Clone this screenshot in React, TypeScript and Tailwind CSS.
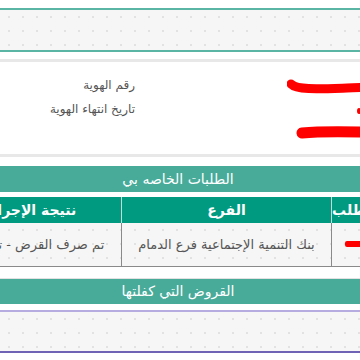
const dots =
  "bg-[#f6f6f6] bg-[radial-gradient(#e2e2e2_1px,transparent_1px)] bg-[size:14px_14px]";

function Scribbles() {
  return (
    <svg className="absolute inset-0 w-[123px] h-[92px]" viewBox="0 0 123 92" fill="none">
      <path
        d="M4 22 C 10 28, 30 27, 60 26 S 100 24, 130 25"
        stroke="#ff0000"
        strokeWidth="9"
        strokeLinecap="round"
      />
      <ellipse cx="72" cy="49" rx="2" ry="3" fill="#ff0000" />
      <path d="M15 71 Q 45 68 130 72" stroke="#ff0000" strokeWidth="11" strokeLinecap="round" />
    </svg>
  );
}

export default function App() {
  return (
    <div className="w-[360px] h-[360px] overflow-hidden bg-white font-['DejaVu_Sans',sans-serif]">
      <div dir="rtl" className="w-[464px] ml-[-54px] pt-[8px]">
        {/* search strip */}
        <div className={`h-[44px] border-y-2 border-[#5bb5a4] ${dots}`} />

        {/* identity info */}
        <div className="mt-[7px] h-[98px] border-y-[3px] border-[#e8e8e8] bg-white flex flex-row">
          <div className="relative w-[123px] h-full">
            <Scribbles />
          </div>
          <div className="flex-1" />
          <div className="w-[189px] pt-[11px] text-[12px] text-[#555]">
            <div className="h-[24px] leading-[24px]">رقم الهوية</div>
            <div className="h-[24px] leading-[24px]">تاريخ انتهاء الهوية</div>
          </div>
        </div>

        {/* my requests */}
        <div className="mt-[9px] h-[26px] bg-[#48ab9a] text-white text-[14px] leading-[26px] text-center">
          الطلبات الخاصه بي
        </div>
        <table className="mt-[5px] w-full border-collapse table-fixed">
          <thead>
            <tr className="h-[26px] bg-[#009a80] text-white text-[14px] font-bold whitespace-nowrap">
              <th className="w-[78px] p-0 border-l border-[#c9d9d5] font-bold overflow-hidden">رقم الطلب</th>
              <th className="w-[210px] p-0 border-l border-[#c9d9d5] font-bold">الفرع</th>
              <th className="w-[176px] p-0 font-bold">نتيجة الإجراء</th>
            </tr>
          </thead>
          <tbody>
            <tr className={`h-[43px] text-[13px] text-[#555] border-b border-[#8a8a8a] ${dots}`}>
              <td className="p-0 border-l border-r border-[#8a8a8a]">
                <div className="mx-auto w-[52px] h-[6px] bg-[#ff0000] rounded-[2px]" />
              </td>
              <td className="p-0 border-l border-[#8a8a8a] text-center whitespace-nowrap">
                بنك التنمية الإجتماعية فرع الدمام
              </td>
              <td className="p-0 pr-[12px] text-center whitespace-nowrap overflow-hidden">
                تم صرف القرض - تم السداد
              </td>
            </tr>
          </tbody>
        </table>

        {/* guaranteed loans */}
        <div className="mt-[11px] border-t border-[#e2e2e2] h-[26px] bg-[#48ab9a] text-white text-[14px] leading-[25px] text-center">
          القروض التي كفلتها
        </div>
        <div className={`mt-[6px] h-[43px] border-t-2 border-[#b6acdf] border-b-2 border-b-[#6f63b5] ${dots}`} />
      </div>
    </div>
  );
}
